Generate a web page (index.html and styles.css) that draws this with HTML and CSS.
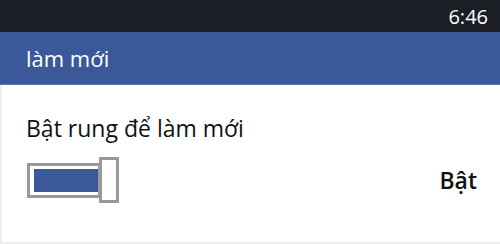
FILE: index.html
```html
<!DOCTYPE html>
<html lang="vi">
<head>
    <meta charset="UTF-8">
    <title>làm mới</title>
    <link rel="stylesheet" href="styles.css">
</head>
<body>
<div class="status-bar">
    <span class="clock">6:46</span>
</div>
<header class="header">
    <h1>làm mới</h1>
</header>
<main class="content">
    <div class="setting-label">Bật rung để làm mới</div>
    <div class="setting-row">
        <div class="toggle">
            <div class="toggle-track"><div class="toggle-fill"></div></div>
            <div class="toggle-thumb"></div>
        </div>
        <span class="toggle-state">Bật</span>
    </div>
</main>
</body>
</html>
```

FILE: styles.css
```css
* { margin: 0; padding: 0; box-sizing: border-box; }

body {
    font-family: "Open Sans", "Noto Sans", sans-serif;
    background: #ffffff;
    color: #111111;
    width: 500px;
    height: 244px;
    overflow: hidden;
}

.status-bar {
    height: 32px;
    background: #1b1e25;
    display: flex;
    justify-content: flex-end;
    align-items: center;
    padding-right: 12px;
}
.clock { color: #ffffff; font-size: 20px; }

.header {
    height: 53px;
    background: #3b5998;
    display: flex;
    align-items: center;
    padding-left: 26px;
    border-bottom: 1px solid #5a74b0;
}
.header h1 { color: #ffffff; font-size: 22px; font-weight: 400; }

.content {
    height: 159px;
    border-left: 2px solid #eeeeee;
    border-bottom: 2px solid #eeeeee;
    padding: 27px 23px 0 24px;
}

.setting-label { font-size: 23px; line-height: 32px; }

.setting-row {
    display: flex;
    justify-content: space-between;
    align-items: center;
    margin-top: 13px;
}

.toggle { display: flex; align-items: center; margin-left: 1px; }
.toggle-track {
    width: 74px;
    height: 35px;
    border: 3px solid #999999;
    padding: 3px 0 3px 4px;
    margin-right: -2px;
}
.toggle-fill { width: 100%; height: 100%; background: #3b5998; }
.toggle-thumb {
    width: 20px;
    height: 46px;
    border: 3px solid #999999;
    background: #ffffff;
}
.toggle-state { font-size: 23px; font-weight: 600; }
```
